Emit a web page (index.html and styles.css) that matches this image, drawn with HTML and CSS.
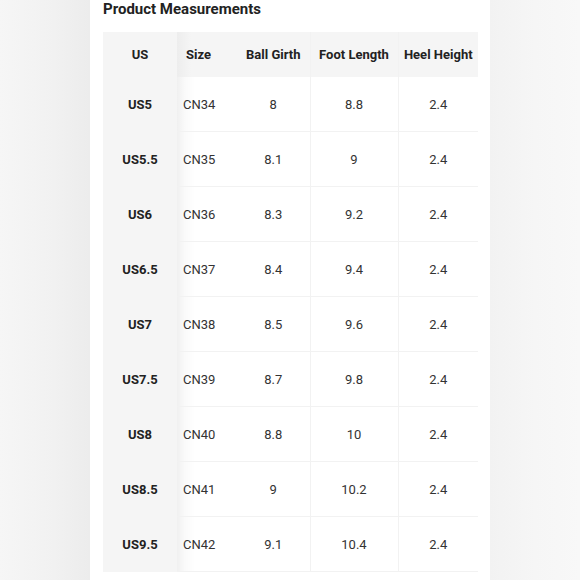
FILE: index.html
```html
<!DOCTYPE html>
<html>
<head>
<meta charset="utf-8">
<link rel="stylesheet" href="styles.css">
</head>
<body>
<div class="page">
  <div class="side side-left"></div>
  <div class="panel">
    <h2 class="title">Product Measurements</h2>
    <table class="sizes">
      <colgroup>
        <col class="w-us"><col class="w-size"><col class="w-ball"><col class="w-foot"><col class="w-heel">
      </colgroup>
      <thead>
        <tr><th class="c-us">US</th><th class="c-size">Size</th><th>Ball Girth</th><th>Foot Length</th><th>Heel Height</th></tr>
      </thead>
      <tbody>
        <tr><td class="c-us">US5</td><td class="c-size">CN34</td><td>8</td><td>8.8</td><td>2.4</td></tr>
        <tr><td class="c-us">US5.5</td><td class="c-size">CN35</td><td>8.1</td><td>9</td><td>2.4</td></tr>
        <tr><td class="c-us">US6</td><td class="c-size">CN36</td><td>8.3</td><td>9.2</td><td>2.4</td></tr>
        <tr><td class="c-us">US6.5</td><td class="c-size">CN37</td><td>8.4</td><td>9.4</td><td>2.4</td></tr>
        <tr><td class="c-us">US7</td><td class="c-size">CN38</td><td>8.5</td><td>9.6</td><td>2.4</td></tr>
        <tr><td class="c-us">US7.5</td><td class="c-size">CN39</td><td>8.7</td><td>9.8</td><td>2.4</td></tr>
        <tr><td class="c-us">US8</td><td class="c-size">CN40</td><td>8.8</td><td>10</td><td>2.4</td></tr>
        <tr><td class="c-us">US8.5</td><td class="c-size">CN41</td><td>9</td><td>10.2</td><td>2.4</td></tr>
        <tr><td class="c-us">US9.5</td><td class="c-size">CN42</td><td>9.1</td><td>10.4</td><td>2.4</td></tr>
      </tbody>
    </table>
  </div>
  <div class="side side-right"></div>
</div>
</body>
</html>
```
FILE: styles.css
```css
html, body {
  margin: 0;
  padding: 0;
  width: 580px;
  height: 580px;
  overflow: hidden;
  font-family: Roboto, "Liberation Sans", Arial, sans-serif;
}
.page {
  display: flex;
  width: 580px;
  height: 580px;
}
.side {
  flex: 0 0 auto;
  height: 580px;
}
.side-left {
  width: 90px;
  background: linear-gradient(to right, #f6f6f6 0%, #f1f1f1 60%, #ececec 100%);
}
.side-right {
  width: 90px;
  background: linear-gradient(to right, #f2f2f2 0%, #f6f6f6 50%, #f8f8f8 100%);
}
.panel {
  width: 400px;
  background: #fff;
  padding: 0 0 0 13px;
  box-sizing: border-box;
}
.title {
  margin: 0;
  height: 32px;
  line-height: 18px;
  font-size: 15px;
  font-weight: 700;
  color: #222;
}
.sizes {
  border-collapse: collapse;
  table-layout: fixed;
  width: 375px;
  font-size: 13px;
  color: #333;
}
.w-us { width: 74px; }
.w-size { width: 60px; }
.w-ball { width: 73px; }
.w-foot { width: 88px; }
.w-heel { width: 80px; }
.sizes th {
  height: 45px;
  padding: 0;
  background: #f5f5f5;
  font-weight: 700;
  color: #222;
  text-align: center;
}
.sizes td {
  height: 54px;
  padding: 0;
  text-align: center;
  border-bottom: 1px solid #f2f2f2;
}
.sizes td:nth-child(3), .sizes td:nth-child(4),
.sizes th:nth-child(3), .sizes th:nth-child(4) {
  border-right: 1px solid #f2f2f2;
}
.sizes .c-us {
  background: #f5f5f5;
  font-weight: 700;
  color: #222;
  border-bottom: none;
}
.sizes .c-size {
  text-align: left;
  text-indent: 6px;
  background: linear-gradient(to right, #f0f0f0 0px, #fafafa 8px, #fff 18px);
}
.sizes th.c-size {
  text-indent: 9px;
  background: linear-gradient(to right, #ededed 0px, #f5f5f5 14px);
}
```
